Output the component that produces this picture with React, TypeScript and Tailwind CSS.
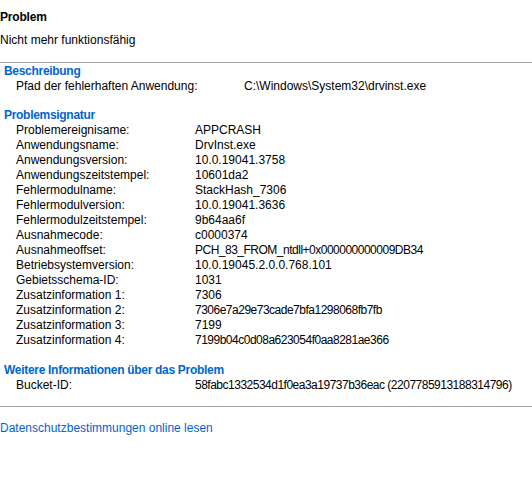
const signatur: [string, string, boolean?][] = [
  ['Problemereignisame:', 'APPCRASH'],
  ['Anwendungsname:', 'DrvInst.exe'],
  ['Anwendungsversion:', '10.0.19041.3758'],
  ['Anwendungszeitstempel:', '10601da2'],
  ['Fehlermodulname:', 'StackHash_7306'],
  ['Fehlermodulversion:', '10.0.19041.3636'],
  ['Fehlermodulzeitstempel:', '9b64aa6f'],
  ['Ausnahmecode:', 'c0000374'],
  ['Ausnahmeoffset:', 'PCH_83_FROM_ntdll+0x000000000009DB34', true],
  ['Betriebsystemversion:', '10.0.19045.2.0.0.768.101'],
  ['Gebietsschema-ID:', '1031'],
  ['Zusatzinformation 1:', '7306'],
  ['Zusatzinformation 2:', '7306e7a29e73cade7bfa1298068fb7fb', true],
  ['Zusatzinformation 3:', '7199'],
  ['Zusatzinformation 4:', '7199b04c0d08a623054f0aa8281ae366', true],
]

function Row({ label, value, tight = false, valueX = 'w-[179px]' }: { label: string; value: string; tight?: boolean; valueX?: string }) {
  return (
    <div className="flex h-[15px] pl-4 whitespace-nowrap">
      <span className={`${valueX} shrink-0`}>{label}</span>
      <span className={tight ? 'tracking-[-0.5px]' : ''}>{value}</span>
    </div>
  )
}

function Heading({ children, className = '' }: { children: string; className?: string }) {
  return <div className={`h-[15px] pl-1 font-bold tracking-[-0.3px] text-[#0066cc] ${className}`}>{children}</div>
}

export default function App() {
  return (
    <div
      className="w-[532px] h-[502px] bg-white text-black text-[12px] leading-[15px] pt-[10px] overflow-hidden"
      style={{ fontFamily: '"Liberation Sans", Arial, sans-serif' }}
    >
      <div className="h-[15px] font-bold tracking-[-0.2px]">Problem</div>
      <div className="h-[15px] mt-2">Nicht mehr funktionsfähig</div>
      <div className="mt-[14px] border-t border-[#a0a0a0]" />

      <Heading className="mt-px">Beschreibung</Heading>
      <Row label="Pfad der fehlerhaften Anwendung:" value="C:\Windows\System32\drvinst.exe" valueX="w-[228px]" />

      <Heading className="mt-[14px]">Problemsignatur</Heading>
      {signatur.map(([l, v, t]) => (
        <Row key={l} label={l} value={v} tight={t} />
      ))}

      <Heading className="mt-[15px]">Weitere Informationen über das Problem</Heading>
      <Row label="Bucket-ID:" value="58fabc1332534d1f0ea3a19737b36eac (2207785913188314796)" tight />

      <div className="mt-[13px] border-t border-[#a0a0a0]" />
      <div className="mt-[14px] h-[15px] text-[#0066cc]">Datenschutzbestimmungen online lesen</div>
    </div>
  )
}
